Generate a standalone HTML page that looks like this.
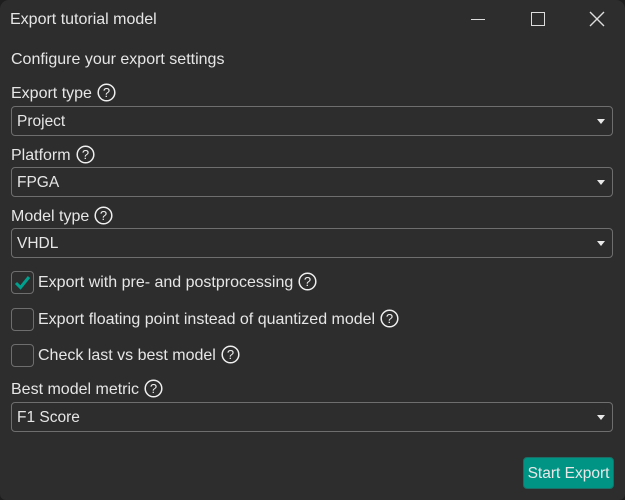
<!DOCTYPE html>
<html><head><meta charset="utf-8"><style>
*{box-sizing:border-box;margin:0;padding:0}
html,body{width:625px;height:500px;overflow:hidden;background:#1e1e1e}
body{font-family:"Liberation Sans","DejaVu Sans",sans-serif;color:#e6e6e6;font-size:16px}
.win{position:absolute;left:0;top:0;width:625px;height:500px;background:#2d2d2d;border-radius:9px 9px 6px 6px;overflow:hidden}
.abs{position:absolute;white-space:nowrap}
.sel{position:absolute;left:11px;width:602px;height:30px;border:1px solid #6e6e6e;border-radius:4px;padding-left:5px;line-height:30px;font-size:15.5px}
.sel:after{content:"";position:absolute;right:7px;top:12px;border-left:4.5px solid transparent;border-right:4.5px solid transparent;border-top:5px solid #e8e8e8}
.cb{position:absolute;left:11px;width:23px;height:23px;border:1px solid #6e6e6e;border-radius:4px}
.q{display:inline-block;vertical-align:middle;margin-left:5px;margin-top:-3px}
.btn{position:absolute;left:523px;top:457px;width:91px;height:32px;background:#009485;border:1px solid #1a6e65;border-radius:4px;color:#e8e8e8;font-size:15.5px;line-height:32px;text-align:center}
</style></head><body>
<div class="win">
<div class="abs" style="left:10px;top:11px">Export tutorial model</div>
<div class="abs" style="left:471px;top:19px;width:14px;height:1px;background:#ddd"></div>
<div class="abs" style="left:531px;top:12px;width:14px;height:14px;border:1.5px solid #ddd"></div>
<svg class="abs" style="left:589px;top:11px" width="16" height="16"><path d="M1 1L15 15M15 1L1 15" stroke="#ddd" stroke-width="1.4"/></svg>

<div class="abs" style="left:11px;top:51px">Configure your export settings</div>

<div class="abs" style="left:11px;top:85px">Export type<svg class="q" width="19" height="19"><circle cx="9.5" cy="9.5" r="8.3" fill="none" stroke="#eee" stroke-width="1.5"/><text x="9.5" y="14" font-size="13" text-anchor="middle" fill="#eee" font-family="Liberation Sans">?</text></svg></div>
<div class="sel" style="top:106px">Project</div>

<div class="abs" style="left:11px;top:147px">Platform<svg class="q" width="19" height="19"><circle cx="9.5" cy="9.5" r="8.3" fill="none" stroke="#eee" stroke-width="1.5"/><text x="9.5" y="14" font-size="13" text-anchor="middle" fill="#eee" font-family="Liberation Sans">?</text></svg></div>
<div class="sel" style="top:167px">FPGA</div>

<div class="abs" style="left:11px;top:208px">Model type<svg class="q" width="19" height="19"><circle cx="9.5" cy="9.5" r="8.3" fill="none" stroke="#eee" stroke-width="1.5"/><text x="9.5" y="14" font-size="13" text-anchor="middle" fill="#eee" font-family="Liberation Sans">?</text></svg></div>
<div class="sel" style="top:228px">VHDL</div>

<div class="cb" style="top:271px"><svg width="21" height="21" style="position:absolute;left:0;top:0"><path d="M4 11L8.5 15.5L17 5" fill="none" stroke="#00a08e" stroke-width="3"/></svg></div>
<div class="abs" style="left:38px;top:274px">Export with pre- and postprocessing<svg class="q" width="19" height="19"><circle cx="9.5" cy="9.5" r="8.3" fill="none" stroke="#eee" stroke-width="1.5"/><text x="9.5" y="14" font-size="13" text-anchor="middle" fill="#eee" font-family="Liberation Sans">?</text></svg></div>

<div class="cb" style="top:308px"></div>
<div class="abs" style="left:38px;top:311px">Export floating point instead of quantized model<svg class="q" width="19" height="19"><circle cx="9.5" cy="9.5" r="8.3" fill="none" stroke="#eee" stroke-width="1.5"/><text x="9.5" y="14" font-size="13" text-anchor="middle" fill="#eee" font-family="Liberation Sans">?</text></svg></div>

<div class="cb" style="top:344px"></div>
<div class="abs" style="left:38px;top:347px">Check last vs best model<svg class="q" width="19" height="19"><circle cx="9.5" cy="9.5" r="8.3" fill="none" stroke="#eee" stroke-width="1.5"/><text x="9.5" y="14" font-size="13" text-anchor="middle" fill="#eee" font-family="Liberation Sans">?</text></svg></div>

<div class="abs" style="left:11px;top:381px">Best model metric<svg class="q" width="19" height="19"><circle cx="9.5" cy="9.5" r="8.3" fill="none" stroke="#eee" stroke-width="1.5"/><text x="9.5" y="14" font-size="13" text-anchor="middle" fill="#eee" font-family="Liberation Sans">?</text></svg></div>
<div class="sel" style="top:402px">F1 Score</div>

<div class="btn">Start Export</div>
</div>
</body></html>
